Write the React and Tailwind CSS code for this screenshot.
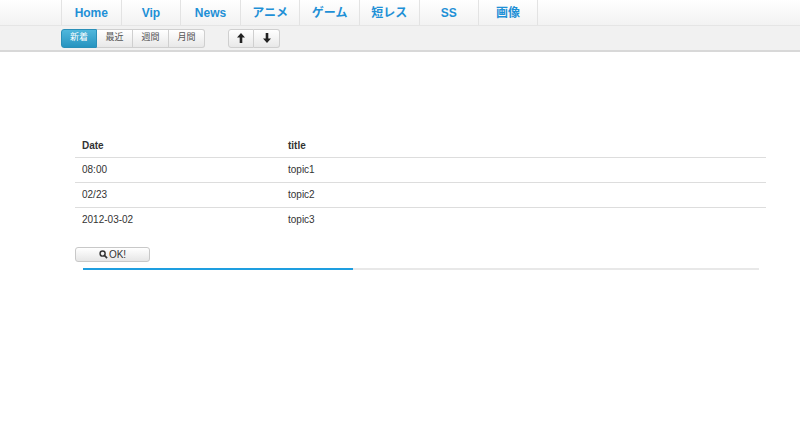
import React from 'react';

const tabs = ['Home', 'Vip', 'News', 'アニメ', 'ゲーム', '短レス', 'SS', '画像'];
const ranges = ['新着', '最近', '週間', '月間'];
const rows = [
  ['08:00', 'topic1'],
  ['02/23', 'topic2'],
  ['2012-03-02', 'topic3'],
];

function Arrow({ down }) {
  return (
    <svg width="8" height="10" viewBox="0 0 8 10" style={{ transform: down ? 'rotate(180deg)' : undefined }}>
      <path d="M4 0 L8 4.5 H5.3 V10 H2.7 V4.5 H0 Z" fill="#222" />
    </svg>
  );
}

function App() {
  return (
    <div className="min-h-[436px] bg-white text-[#333]" style={{ fontFamily: '"Liberation Sans", Arial, "Noto Sans CJK JP", sans-serif' }}>
      <div className="h-[26px] bg-gradient-to-b from-white to-[#f2f2f2] border-b border-[#e5e5e5]">
        <div className="flex ml-[61px] h-full">
          {tabs.map((t) => (
            <div key={t} className="w-[59.6px] h-full flex items-center justify-center border-l border-[#e3e3e3] last:border-r text-[12px] font-bold text-[#1e90d6]">
              {t}
            </div>
          ))}
        </div>
      </div>
      <div className="h-[26px] bg-[#f1f1f1] border-b-2 border-[#d8d8d8] flex items-center">
        <div className="ml-[61px] flex h-[19px]">
          {ranges.map((r, i) => (
            <div
              key={r}
              className={
                'w-[36px] flex items-center justify-center text-[9px] border ' +
                (i === 0 ? 'bg-gradient-to-b from-[#4fb7dc] to-[#2694c0] text-white border-[#2a8fb8] rounded-l-[3px]' : 'bg-gradient-to-b from-white to-[#e8e8e8] text-[#555] border-[#cfcfcf] border-l-0') +
                (i === 3 ? ' rounded-r-[3px]' : '')
              }
            >
              {r}
            </div>
          ))}
        </div>
        <div className="ml-[23px] flex h-[19px]">
          {[false, true].map((d, i) => (
            <div key={i} className={'w-[26px] flex items-center justify-center border border-[#cfcfcf] bg-gradient-to-b from-white to-[#e8e8e8] ' + (i === 0 ? 'rounded-l-[3px]' : 'border-l-0 rounded-r-[3px]')}>
              <Arrow down={d} />
            </div>
          ))}
        </div>
      </div>
      <div className="ml-[75px] w-[691px] mt-[82px]">
        <table className="w-full text-[10px] border-collapse">
          <thead>
            <tr className="border-b border-[#ddd]">
              <th className="text-left font-bold h-[23px] pl-[7px] w-[213px]">Date</th>
              <th className="text-left font-bold">title</th>
            </tr>
          </thead>
          <tbody>
            {rows.map(([d, t]) => (
              <tr key={t} className="border-b border-[#ddd] last:border-0">
                <td className="h-[25px] pl-[7px]">{d}</td>
                <td>{t}</td>
              </tr>
            ))}
          </tbody>
        </table>
        <div className="mt-[15px] w-[75px] h-[15px] flex items-center justify-center rounded-[3px] border border-[#c8c8c8] bg-gradient-to-b from-white to-[#e6e6e6] text-[10px] text-[#333]">
          <svg width="9" height="9" viewBox="0 0 10 10" className="mr-[1px]"><circle cx="4" cy="4" r="2.8" fill="none" stroke="#333" strokeWidth="1.6" /><line x1="6" y1="6" x2="9" y2="9" stroke="#333" strokeWidth="1.8" /></svg>
          OK!
        </div>
        <div className="ml-[8px] mt-[6px] w-[676px] h-[2px] bg-[#e8e8e8]">
          <div className="w-[270px] h-full bg-[#1e9ee0]" />
        </div>
      </div>
    </div>
  );
}

export default App;
